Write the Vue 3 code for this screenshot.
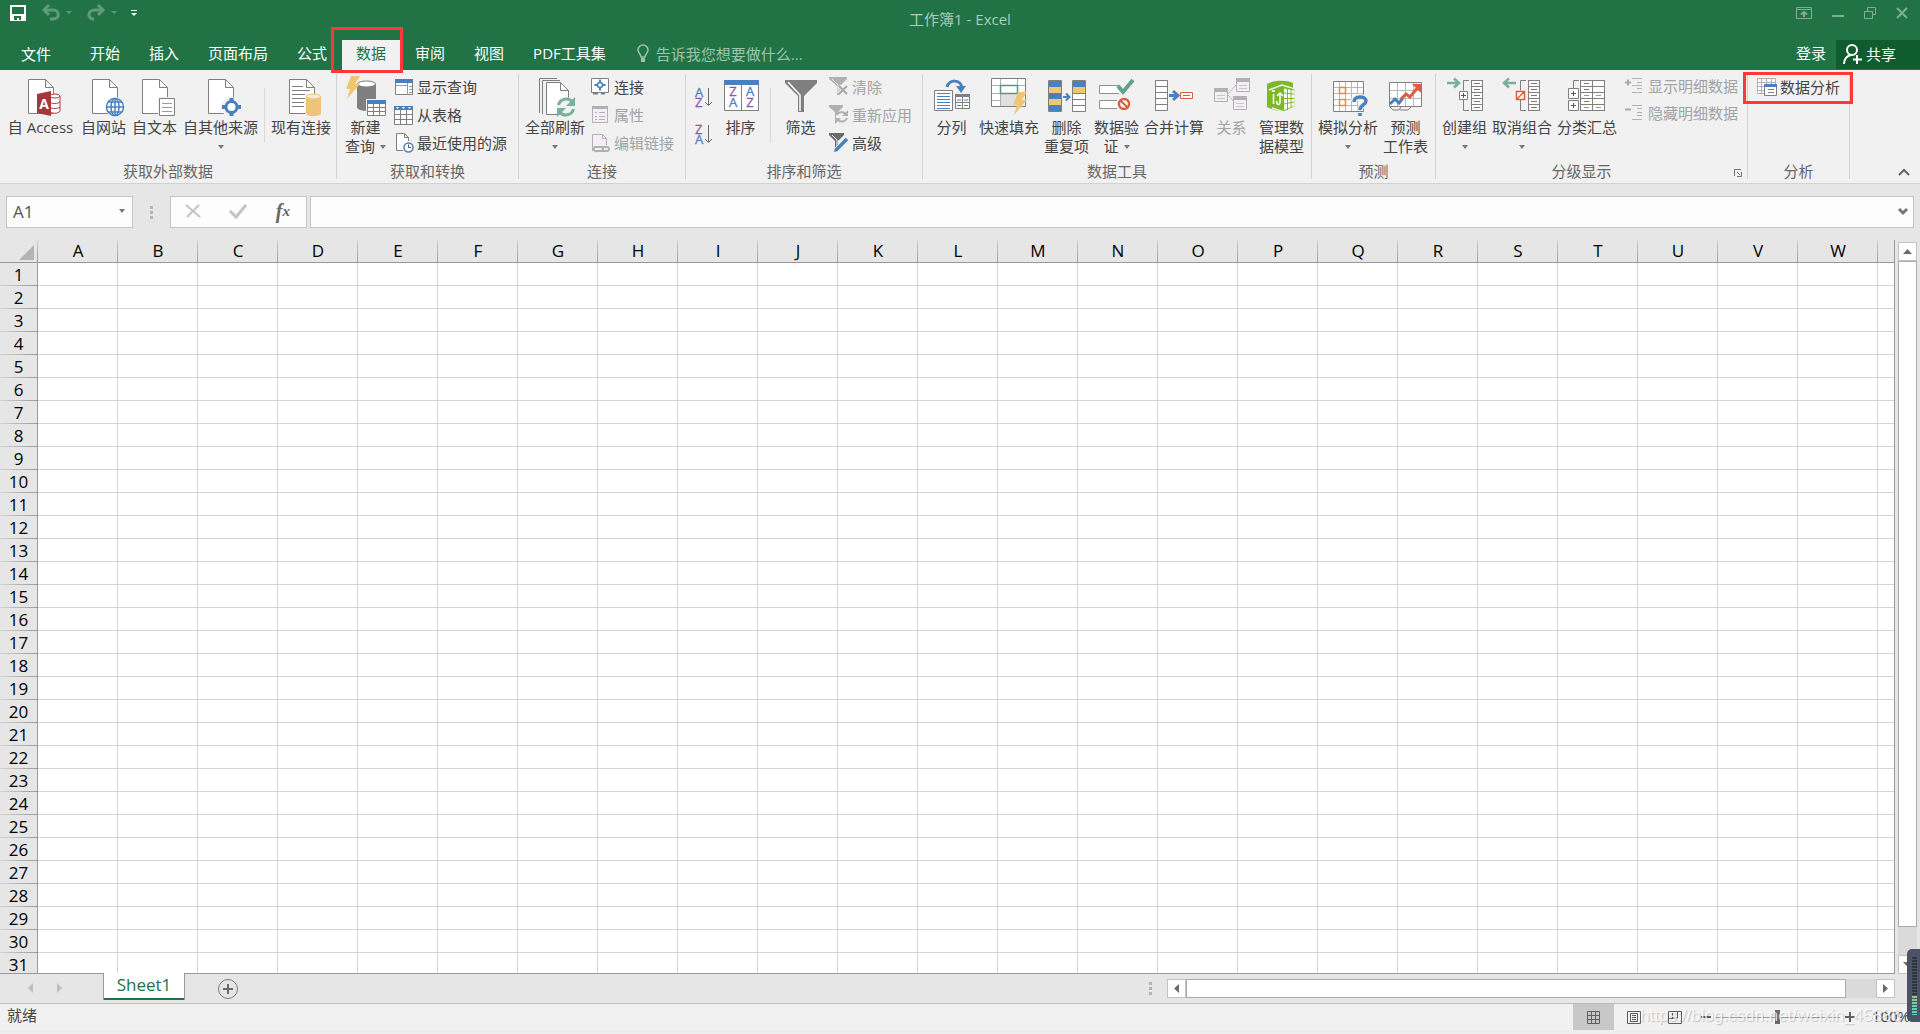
<script setup>
const page = (x = 7, y = 3) =>
  `<path d="M${x + 0.5} ${y + 0.5}h17l8 8v26h-25z" fill="#fff" stroke="#7f7f7f"/><path d="M${x + 17.5} ${y + 0.5}v8h8" fill="none" stroke="#7f7f7f"/>`
const bolt = (x, y) =>
  `<path transform="translate(${x} ${y})" d="M5 0h9l-5 8h5L1 23l3-10H0z" fill="#f0c575"/>`
const lines = (x1, x2, ys, c = '#7f7f7f') =>
  ys.map(y => `<path d="M${x1} ${y}.5H${x2}" stroke="${c}"/>`).join('')
const dashList = (x, w) =>
  `<rect x="${x}.5" y="4.5" width="${w}" height="30" fill="#fff" stroke="#7f7f7f"/>` + lines(x, x + w, [10, 16, 22, 28])

const icons = {
  access: page() + `<path d="M28 19h12v17H28z" fill="#f1f1f1"/><g fill="#fff" stroke="#b23a3e"><path d="M28 20v15c3 3 9 3 11 0V20"/><ellipse cx="34" cy="20" rx="5" ry="2"/><path d="M28 26c3 2 9 2 11 0M28 31c3 2 9 2 11 0" fill="none"/></g><path d="M16 18l14-3v25l-14-3z" fill="#a4373a"/><text x="23" y="33" font-size="14" font-weight="700" fill="#fff" text-anchor="middle">A</text>`,
  web: page(8) + `<circle cx="31" cy="31" r="10" fill="#f1f1f1"/><g fill="#fff" stroke="#4a81bd" stroke-width="1.5"><circle cx="31" cy="31" r="8.5"/><ellipse cx="31" cy="31" rx="4" ry="8.500"/><path d="M31 22v18M22 31h18M24 26h14M24 36h14" fill="none"/></g>`,
  text: page() + `<path d="M23 21h18v20H23z" fill="#f1f1f1"/><path d="M24.500 22.500h15v17h-15z" fill="#fff" stroke="#7f7f7f"/>` + lines(27, 37, [27, 31, 35], '#9a9a9a'),
  other: page() + `<circle cx="30" cy="31" r="10" fill="#f1f1f1"/><circle cx="30.500" cy="31" r="5.500" fill="#fff" stroke="#4a81bd" stroke-width="3"/><path d="M28.500 22h4v4h-4zM28.500 36h4v4h-4zM21 29h5v4h-5zM35 29h5v4h-5z" fill="#4a81bd"/>`,
  existing: page(8) + lines(11, 22, [10]) + lines(11, 29, [14, 18, 22]) + lines(11, 23, [26, 30]) + `<path d="M24 18h17v22H24z" fill="#f1f1f1"/><path d="M25 21v17c3 3 12 3 15 0V21z" fill="#eec47c"/><ellipse cx="32.500" cy="20.500" rx="7" ry="2.500" fill="#fbeccb" stroke="#eec47c"/>`,
  newQuery: `<path d="M11 8v24c3 4 16 4 19 0V8z" fill="#7f7f7f"/><ellipse cx="20.500" cy="8" rx="9" ry="3" fill="#fff" stroke="#7f7f7f"/>` + bolt(0, 0) + `<path d="M20 23h21v18H20z" fill="#f1f1f1"/><path d="M21.500 24.500h18v15h-18z" fill="#fff" stroke="#7f7f7f"/><path d="M21 24h19v4H21z" fill="#4a81bd"/><path d="M22 31.500h17M22 35.500h17M27.500 28v12M33.500 28v12" stroke="#7f7f7f"/>`,
  refresh: `<path d="M4.500 37V2.500H22M7.500 38V4.500H25" fill="none" stroke="#7f7f7f"/><path d="M11.500 6.500h14l8 8v24h-22z" fill="#fff" stroke="#7f7f7f"/><path d="M25.500 6.500v8h8" fill="none" stroke="#7f7f7f"/><circle cx="31" cy="31" r="10" fill="#f1f1f1"/><path d="M23.500 29a8 8 0 0 1 14-3M38.500 33a8 8 0 0 1-14 3" fill="none" stroke="#78b09a" stroke-width="3"/><path d="M40 21v9h-9zM22 41v-9h9z" fill="#78b09a"/>`,
  sort: `<path d="M3.500 4.500h34v30h-34z" fill="#fff" stroke="#7f7f7f"/><path d="M3 4h35v5H3z" fill="#4a81bd"/><path d="M20.500 9v26" stroke="#7f7f7f"/><g font-size="13" text-anchor="middle" stroke-width=".3"><g fill="#8f55a8" stroke="#8f55a8"><text x="12" y="20">Z</text><text x="29" y="31">Z</text></g><g fill="#4a81bd" stroke="#4a81bd"><text x="12" y="31">A</text><text x="29" y="20">A</text></g></g>`,
  filter: `<path d="M4 4h32v3L23 20v16h-6V20L4 7z" fill="#7f7f7f"/><path d="M7 6l12 13v16" fill="none" stroke="#fff" stroke-width="1.500"/>`,
  split: `<path d="M2.500 14.500h18v20h-18z" fill="#fff" stroke="#7f7f7f"/>` + lines(5, 18, [17, 20, 23, 26, 29, 32], '#4a81bd') + `<path d="M23.500 18.500h14v14h-14z" fill="#fff" stroke="#7f7f7f"/><path d="M23 18h15v3H23zM30 20h1v13h-1zM24 26h13v1H24z" fill="#7f7f7f"/><path d="M25 24h4M32 24h4M25 29.500h4M32 29.500h4" stroke="#4a81bd"/><path d="M15 11c2-8 14-8 15 1" fill="none" stroke="#4a81bd" stroke-width="3"/><path d="M24 10l5 7 5-7z" fill="#4a81bd"/>`,
  flash: `<path d="M2.500 2.500h34v28h-34z" fill="#fff" stroke="#7f7f7f"/><path d="M3 9.500h33M3 17.500h33M3 24.500h33M11.500 3v27M28.500 3v27" stroke="#b0b0b0"/><path d="M12 18h16v12H12z" fill="#e0e0e0"/><path d="M11.500 9.500h17v8h-17z" fill="#fff" stroke="#4f9d80" stroke-width="1.500"/>` + bolt(24, 16),
  dedupe: `<path d="M1.500 4.500h13v31h-13zM25.500 4.500h13v31h-13z" fill="#fff" stroke="#7f7f7f"/><path d="M2 5h12v6H2zM2 17h12v6H2zM2 29h12v6H2zM26 5h12v6H26z" fill="#4a81bd"/><path d="M2 11h12v6H2zM2 23h12v6H2zM26 11h12v6H26z" fill="#f0c575"/>` + lines(26, 38, [17, 23, 29]) + `<path d="M16 21h5M19 17.500l3.500 3.500-3.500 3.500" fill="none" stroke="#4a81bd" stroke-width="2"/>`,
  validate: `<path d="M22 9.500H2.500v8H22M20 24.500H2.500v8H20" fill="#fff" stroke="#8f8f8f"/><path d="M21 10l5 6L36 4" fill="none" stroke="#5fa388" stroke-width="4"/><circle cx="27" cy="28" r="5" fill="#fff" stroke="#d9603f" stroke-width="2.500"/><path d="M23.500 24.500l7 7" stroke="#d9603f" stroke-width="2"/>`,
  merge: `<path d="M1.500 4.500h12v30h-12z" fill="#fff" stroke="#7f7f7f"/>` + lines(2, 14, [10, 16, 22, 28]) + `<path d="M15 19.500h7M19 15l5 4.500-5 4.500" fill="none" stroke="#4a81bd" stroke-width="3"/><path d="M26.500 16.500h12v6h-12z" fill="#fff" stroke="#d9603f"/><path d="M29 19.500h7" stroke="#7f7f7f"/>`,
  relation: `<path d="M16 18l8-9M16 19l8 9" stroke="#b9b6ba"/><g fill="#f4eff6" stroke="#b3b0b4"><path d="M2.500 12.500h13v13h-13zM24.500 2.500h13v13h-13zM21.500 20.500h13v13h-13z"/></g><path d="M2 12h14v4H2zM24 2h14v4H24zM21 20h14v4H21z" fill="#b3b0b4"/><path d="M5 19.500h8M5 22.500h8M27 9.500h8M27 12.500h8M24 27.500h8M24 30.500h8" stroke="#c9c6ca"/>`,
  model: `<path d="M5 8c6-4 20-4 26-1v5l2 1v18l-11 5-10-2-7-3z" fill="#7cb928"/><path d="M7 14l13-5 13 4v18l-11 5-12-4" fill="#7cb928" stroke="#f1f1f1" stroke-width="1.500"/><path d="M22 12.500l10 2v15.500l-10 4z" fill="#fff"/><path d="M22 17l10 1M22 22.500h10M22 28l10-2M25.500 12v22M29 12v20" stroke="#7cb928"/><path d="M11.500 18v10M10 15h3M15 20l3-3 3 3M18 17v9c0 4-4 3-3-1" stroke="#fff" fill="none" stroke-width="1.500"/>`,
  whatif: `<path d="M5.500 5.500h30v30h-30z" fill="#fff" stroke="#7f7f7f"/><path d="M6 11.500h29M6 17.500h29M6 23.500h29M6 29.500h29M11.500 6v29M17.500 6v29M23.500 6v29M29.500 6v29" stroke="#b8b8b8"/><path d="M11.500 11.500h6v6h-6zM11.500 23.500h6v6h-6z" fill="#fff" stroke="#e88a3c" stroke-width="1.500"/><path d="M26 25c0-6 11-6 11 0 0 4-5 4-5 9" fill="none" stroke="#f1f1f1" stroke-width="6"/><path d="M26 26c0-7 12-6 12-1 0 4-6 4-6 9M32 37v3" fill="none" stroke="#4a81bd" stroke-width="3.500"/>`,
  forecast: `<path d="M3.500 6.500h32v24h-32z" fill="#fff" stroke="#7f7f7f"/><path d="M4 14.500h31M4 22.500h31M11.500 7v23M19.500 7v23M27.500 7v23" stroke="#b8b8b8"/><path d="M4 31l3 3h6l2-3M14 34h8l3-3" fill="none" stroke="#7f7f7f"/><path d="M4 28l5-5 4 4 4-5" fill="none" stroke="#4a81bd" stroke-width="3"/><path d="M15 23l5-5 4 3 9-11" fill="none" stroke="#d9603f" stroke-width="3"/><path d="M26 8h9v9z" fill="#d9603f"/>`,
  group: dashList(26, 11) + lines(29, 35, [7, 13, 19, 25, 31], '#4a81bd') + `<path d="M24 4.500h-5.500v10M18.500 24v10.500H24" fill="none" stroke="#7f7f7f"/><path d="M14.500 15.500h8v8h-8z" fill="#fff" stroke="#7f7f7f"/><path d="M16 19.500h5M18.500 17v5" stroke="#555"/><path d="M2 7h11M9 2.500l5 4.500-5 4.500" fill="none" stroke="#78b09a" stroke-width="2.500"/>`,
  ungroup: dashList(26, 11) + lines(29, 35, [7, 13, 19, 25, 31], '#4a81bd') + `<path d="M24 4.500h-5.500v10M18.500 24v10.500H24" fill="none" stroke="#7f7f7f"/><path d="M14.500 15.500h8v8h-8zM15 23l7-7" fill="#fff" stroke="#d9603f" stroke-width="1.500"/><path d="M14 7H3M7 2.500L2 7l5 4.500" fill="none" stroke="#78b09a" stroke-width="2.500"/>`,
  subtotal: dashList(13, 24) + `<path d="M25.500 5v30M12 4.500H6.500v8" stroke="#7f7f7f" fill="none"/>` + lines(17, 22, [7, 13], '#4a81bd') + lines(17, 22, [19, 31], '#e88a3c') + lines(17, 22, [25], '#4a81bd') + lines(29, 34, [19, 31], '#e88a3c') + `<path d="M1.500 12.500h10v10h-10zM1.500 24.500h10v10h-10z" fill="#fff" stroke="#7f7f7f"/><path d="M4 17.500h5M6.500 15v5M4 29.500h5M6.500 27v5" stroke="#555"/>`,
  showQuery: `<path d="M1.500 2.500h17v15h-17z" fill="#fff" stroke="#7f7f7f"/><path d="M1 2h18v4H1z" fill="#4a81bd"/><path d="M2 8.500h11M13.500 6v12M15 9.500h3M15 12.500h3M15 15.500h3" stroke="#9a9a9a"/>`,
  table: `<path d="M.5 1.500h18v18H.5z" fill="#fff" stroke="#7f7f7f"/><path d="M0 1h19v4H0z" fill="#4a81bd"/><path d="M1 9.500h17M1 14.500h17M6.500 5v14M12.500 5v14" stroke="#7f7f7f"/><path d="M2 2h3L3.500 4zM8 2h3L9.500 4zM14 2h3l-1.500 2z" fill="#fff"/>`,
  recent: `<path d="M9 17.500H2.500V.5h8l4 4V8M10.500.5v4h4" fill="#fff" stroke="#7f7f7f"/><circle cx="14.500" cy="14.500" r="4.500" fill="#fff" stroke="#4a81bd" stroke-width="1.500"/><path d="M14.500 11.500v3H17" fill="none" stroke="#555"/>`,
  connect: `<path d="M.5 1.500h17v14H.5z" fill="#fff" stroke="#7f7f7f"/><path d="M2 16.500h5M10 16.500h4" stroke="#7f7f7f" stroke-width="2"/><circle cx="9" cy="8" r="2.500" fill="none" stroke="#4a81bd" stroke-width="1.500"/><path d="M9 2.500v3M9 10.500v3M3.500 8h3M11.500 8h3" stroke="#4a81bd" stroke-width="2"/>`,
  props: `<path d="M1.500 1.500h15v16h-15z" fill="#f4eff6" stroke="#b3b0b4"/><path d="M1 1h16v3H1z" fill="#b3b0b4"/><path d="M4 7.500h2M8 7.500h6M4 11.500h2M8 11.500h6M4 14.500h2M8 14.500h6" stroke="#b3b0b4"/>`,
  links: `<path d="M1.500 18V1.500h10l4 4V12M11.500 1.500v4h4" fill="#f4eff6" stroke="#b3b0b4"/><path d="M4 14h6a2 2 0 0 1 0 4H6a2 2 0 0 1-2-4zM11 14h5a2 2 0 0 1 0 4h-5" fill="none" stroke="#b3b0b4" stroke-width="2"/>`,
  clear: `<path d="M0 0h18v2l-7 7v9H8V9L0 2z" fill="#b3b0b4"/><path d="M3 2l6 6v8" stroke="#f1f1f1" fill="none"/><path d="M10 9l8 8M18 9l-8 8" stroke="#f1f1f1" stroke-width="4"/><path d="M10 9l8 8M18 9l-8 8" stroke="#a8a8a8" stroke-width="2"/>`,
  reapply: `<path d="M0 0h14v2L9 7v6H6V7L0 2z" fill="#b3b0b4"/><circle cx="13" cy="12" r="6" fill="#f1f1f1"/><path d="M7.500 10a5.500 5.500 0 0 1 9-1M18 13a5.500 5.500 0 0 1-9 2" fill="none" stroke="#b3b0b4" stroke-width="2"/><path d="M19 5v6h-6zM6 19v-6h6z" fill="#b3b0b4"/>`,
  advanced: `<path d="M0 0h15v2L9 8v7H6V8L0 2z" fill="#6b6b6b"/><path d="M3 2l5 5v7" stroke="#fff" fill="none"/><path d="M7 17L18 6" stroke="#f1f1f1" stroke-width="5"/><path d="M7 17L18 6" stroke="#4a81bd" stroke-width="3.500"/><path d="M5 19l1-4 3 3z" fill="#4a81bd"/>`,
  showDetail: `<path d="M0 5.500h6M3 2.500v6" stroke="#aaa" stroke-width="2"/><path d="M7 1.500h10M7 8.500h10M12 5.500h5M12 11.500h5M7 15.500h10" stroke="#b3b3b3"/>`,
  hideDetail: `<path d="M0 5.500h6" stroke="#aaa" stroke-width="2"/><path d="M7 1.500h10M12 4.500h5M12 8.500h5M12 11.500h5M7 15.500h10" stroke="#b3b3b3"/>`,
  analysis: `<path d="M.5 1.500h18v15H.5zM0 5.500h18M0 9.500h18M0 13.500h18M4.500 1v15M9.500 1v15M14.500 1v15" fill="#fff" stroke="#b0b0b0"/><path d="M7.500 7.500h12v11h-12z" fill="#fff" stroke="#7f7f7f"/><path d="M7 7h13v3H7z" fill="#4a81bd"/><path d="M11 12.500h6M11 15.500h6" stroke="#7f7f7f"/>`,
}

const tabs = ['开始', '插入', '页面布局', '公式', '数据', '审阅', '视图', 'PDF工具集']

const groups = [
  { cls: 'external', title: '获取外部数据', items: [
    { icon: 'access', lines: ['自 Access'] }, { icon: 'web', lines: ['自网站'] }, { icon: 'text', lines: ['自文本'] },
    { icon: 'other', lines: ['自其他来源', ''], drop: true }, { sep: true }, { icon: 'existing', lines: ['现有连接'] } ] },
  { cls: 'transform', title: '获取和转换', items: [
    { icon: 'newQuery', lines: ['新建', '查询'], drop: true },
    { list: [['showQuery', '显示查询'], ['table', '从表格'], ['recent', '最近使用的源']] } ] },
  { cls: 'connections', title: '连接', items: [
    { icon: 'refresh', lines: ['全部刷新', ''], drop: true },
    { list: [['connect', '连接'], ['props', '属性', true], ['links', '编辑链接', true]] } ] },
  { cls: 'sorting', title: '排序和筛选', items: [
    { az: true }, { icon: 'sort', lines: ['排序'] }, { sep: true }, { icon: 'filter', lines: ['筛选'] },
    { list: [['clear', '清除', true], ['reapply', '重新应用', true], ['advanced', '高级']] } ] },
  { cls: 'tools', title: '数据工具', items: [
    { icon: 'split', lines: ['分列'] }, { icon: 'flash', lines: ['快速填充'] }, { icon: 'dedupe', lines: ['删除', '重复项'] },
    { icon: 'validate', lines: ['数据验', '证'], drop: true }, { icon: 'merge', lines: ['合并计算'] },
    { icon: 'relation', lines: ['关系'], off: true }, { icon: 'model', lines: ['管理数', '据模型'] } ] },
  { cls: 'forecasting', title: '预测', items: [
    { icon: 'whatif', lines: ['模拟分析', ''], drop: true }, { icon: 'forecast', lines: ['预测', '工作表'] } ] },
  { cls: 'outline', title: '分级显示', launcher: true, items: [
    { icon: 'group', lines: ['创建组', ''], drop: true }, { icon: 'ungroup', lines: ['取消组合', ''], drop: true },
    { icon: 'subtotal', lines: ['分类汇总'] },
    { list: [['showDetail', '显示明细数据', true], ['hideDetail', '隐藏明细数据', true]] } ] },
  { cls: 'analyze', title: '分析', items: [{ list: [['analysis', '数据分析']] }] },
]

const letterColor = { A: '#4a81bd', Z: '#8f55a8' }
const columns = 'ABCDEFGHIJKLMNOPQRSTUVW'.split('')
const rowCount = 31
</script>

<template>
  <div class="app">
    <header class="head">
      <div class="titlebar">
        <div class="quick">
          <button aria-label="保存"><svg width="16" height="16"><path d="M1 1h14v14H1z" fill="none" stroke="#fff" stroke-width="2" /><path d="M1 9h14v6H1z" fill="#fff" /><path d="M4 11h7v4H9v-2H7v2H4z" fill="#217346" /></svg></button>
          <button aria-label="撤消" class="undo"><svg width="30" height="16"><g fill="none" stroke="#5f9a7a" stroke-width="3"><path d="M2 5h9c7 0 7 9 0 9H8" /><path d="M7 0L2 5l5 5" /></g><path d="M24 6h6l-3 3z" fill="#5f9a7a" /></svg></button>
          <button aria-label="恢复" class="redo"><svg width="30" height="16"><g fill="none" stroke="#5f9a7a" stroke-width="3"><path d="M16 5H8c-8 0-8 9-1 9" /><path d="M11 0l5 5-5 5" /></g><path d="M24 6h6l-3 3z" fill="#5f9a7a" /></svg></button>
          <button aria-label="自定义快速访问工具栏" class="more"><svg width="6" height="8"><path d="M0 1.500h6" stroke="#fff" /><path d="M0 4h6L3 7z" fill="#fff" /></svg></button>
        </div>
        <h1>工作簿1 - Excel</h1>
        <div class="window">
          <button aria-label="功能区显示选项"><svg width="16" height="12"><path d="M.5.500h15v11H.5zM1 2.500h14" fill="none" stroke="#7fae94" /><path d="M8 10V5M5 7.500L8 5l3 2.500" fill="none" stroke="#7fae94" stroke-width="2" /></svg></button>
          <button aria-label="最小化"><svg width="12" height="12"><path d="M0 9h12" stroke="#7fae94" stroke-width="2" /></svg></button>
          <button aria-label="还原"><svg width="12" height="12"><path d="M.5 4.500h8v7h-8zM3.500 4V.5h8v7H9" fill="none" stroke="#7fae94" /></svg></button>
          <button aria-label="关闭"><svg width="12" height="12"><path d="M1 1l10 10M11 1L1 11" stroke="#7fae94" stroke-width="2" /></svg></button>
        </div>
      </div>
      <nav class="tabs">
        <button class="file">文件</button>
        <button v-for="t in tabs" :key="t" class="tab" :class="{ active: t === '数据' }">{{ t }}</button>
        <button class="tell"><svg width="12" height="18"><path d="M4 12c0-3-3-4-3-7a5 5 0 0 1 10 0c0 3-3 4-3 7z" fill="none" stroke="#9dc4ae" stroke-width="1.500" /><path d="M4 13h4v4H4z" fill="#9dc4ae" /></svg>告诉我您想要做什么...</button>
        <button class="login">登录</button>
        <button class="share"><svg width="20" height="20"><g fill="none" stroke="#fff" stroke-width="2"><circle cx="9" cy="6" r="5" /><path d="M1 20c0-5 3-8 7-9M14 11v9M10 15.500h9" /></g></svg>共享</button>
      </nav>
    </header>

    <section class="ribbon">
      <div v-for="g in groups" :key="g.title" class="group" :class="g.cls">
        <div class="body">
          <template v-for="(it, i) in g.items" :key="i">
            <span v-if="it.sep" class="sep"></span>
            <div v-else-if="it.az" class="az">
              <button v-for="p in ['AZ', 'ZA']" :key="p" :aria-label="p === 'AZ' ? '升序' : '降序'">
                <svg width="18" height="22"><g font-size="13" stroke-width=".3"><text v-for="(c, n) in p" :key="c" x="0" :y="n * 10 + 10" :fill="letterColor[c]" :stroke="letterColor[c]">{{ c }}</text></g><path d="M13.500 1v17M10 15l3.500 3.500L17 15" fill="none" stroke="#6b6b6b" /></svg>
              </button>
            </div>
            <div v-else-if="it.list" class="list">
              <button v-for="r in it.list" :key="r[1]" :class="{ off: r[2] }">
                <svg width="20" height="20" v-html="icons[r[0]]"></svg>{{ r[1] }}
              </button>
            </div>
            <button v-else class="big" :class="{ off: it.off }">
              <svg class="ico" width="40" height="42" v-html="icons[it.icon]"></svg>
              <span v-for="(l, n) in it.lines" :key="n" class="line">{{ l }}<i v-if="it.drop && n === 1" class="caret" :class="{ after: l }"></i></span>
            </button>
          </template>
        </div>
        <div class="title">{{ g.title }}</div>
        <button v-if="g.launcher" class="launcher" aria-label="分级显示设置"><svg width="8" height="8"><path d="M.5 7V.5H7" fill="none" stroke="#777" /><path d="M3 3l3 3M7.500 3v4.500H3" fill="none" stroke="#777" /></svg></button>
      </div>
      <button class="collapse" aria-label="折叠功能区"><svg width="12" height="8"><path d="M1 7l5-5 5 5" fill="none" stroke="#666" stroke-width="2" /></svg></button>
    </section>

    <section class="formula">
      <div class="namebox"><input value="A1" aria-label="名称框" /><i class="caret"></i></div>
      <span class="dots"><i></i><i></i><i></i></span>
      <div class="fx">
        <button aria-label="取消"><svg width="16" height="16"><path d="M1 2l14 12M14 2L2 14" stroke="#c3c3c3" stroke-width="2" /></svg></button>
        <button aria-label="输入"><svg width="18" height="16"><path d="M1 8l6 6L17 2" fill="none" stroke="#c3c3c3" stroke-width="3" /></svg></button>
        <button aria-label="插入函数" class="fn">f<small>x</small></button>
      </div>
      <div class="entry"><input aria-label="编辑栏" /><svg width="10" height="8"><path d="M1 1l4 4 4-4" fill="none" stroke="#777" stroke-width="3" /></svg></div>
    </section>

    <main class="work">
      <div class="grid">
        <table>
          <thead>
            <tr><th class="corner"><svg width="16" height="16"><path d="M16 0v15H1z" fill="#b4b4b4" /></svg></th><th v-for="c in columns" :key="c" scope="col">{{ c }}</th><th class="rest"></th></tr>
          </thead>
          <tbody>
            <tr v-for="r in rowCount" :key="r"><th scope="row">{{ r }}</th><td v-for="c in columns" :key="c"></td><td class="rest"></td></tr>
          </tbody>
        </table>
      </div>
      <div class="vscroll">
        <button aria-label="向上"><svg width="9" height="5"><path d="M0 5h9L4.500 0z" fill="#6b6b6b" /></svg></button>
        <div class="track"><div class="thumb"></div></div>
        <button aria-label="向下"><svg width="9" height="5"><path d="M0 0h9L4.500 5z" fill="#6b6b6b" /></svg></button>
      </div>
    </main>

    <section class="sheets">
      <button class="nav" aria-label="上一张"><svg width="6" height="10"><path d="M5 0v10L0 5z" fill="#bdbdbd" /></svg></button>
      <button class="nav next" aria-label="下一张"><svg width="6" height="10"><path d="M0 0v10l5-5z" fill="#bdbdbd" /></svg></button>
      <button class="sheet">Sheet1</button>
      <button class="add" aria-label="新工作表"><svg width="20" height="20"><circle cx="10" cy="10" r="9.500" fill="none" stroke="#7a7a7a" /><path d="M5 10h10M10 5v10" stroke="#6b6b6b" stroke-width="2" /></svg></button>
      <span class="dots"><i></i><i></i><i></i></span>
      <div class="hscroll">
        <button aria-label="向左"><svg width="5" height="9"><path d="M5 0v9L0 4.500z" fill="#6b6b6b" /></svg></button>
        <div class="track"><div class="thumb"></div></div>
        <button aria-label="向右"><svg width="5" height="9"><path d="M0 0v9l5-4.500z" fill="#6b6b6b" /></svg></button>
      </div>
    </section>

    <footer class="status">
      <span class="ready">就绪</span>
      <button class="view on" aria-label="普通"><svg width="13" height="13"><path d="M.5.500h12v12H.5zM4.500 0v13M8.500 0v13M0 4.500h13M0 8.500h13" fill="none" stroke="#5f5f5f" /></svg></button>
      <button class="view" aria-label="页面布局"><svg width="14" height="13"><path d="M.5.500h13v12H.5zM3.500 2.500h7v8h-7zM5 4.500h4M5 6.500h4M5 8.500h4" fill="none" stroke="#5f5f5f" /></svg></button>
      <button class="view" aria-label="分页预览"><svg width="14" height="13"><path d="M.5.500h13v12H.5zM4.500 1v6h5V1M1 7.500h4" fill="none" stroke="#5f5f5f" /></svg></button>
      <button class="zoom" aria-label="缩小"><svg width="10" height="10"><path d="M0 5h10" stroke="#5f5f5f" stroke-width="2" /></svg></button>
      <input class="slider" type="range" min="0" max="100" value="50" aria-label="缩放" />
      <button class="zoom" aria-label="放大"><svg width="10" height="10"><path d="M0 5h10M5 0v10" stroke="#5f5f5f" stroke-width="2" /></svg></button>
      <button class="percent">100%</button>
      <span class="mark">https://blog.csdn.net/weixin_45886</span>
    </footer>
    <div class="meter"><span></span></div>
  </div>
</template>

<style>
body { margin: 0; overflow: hidden; }
</style>

<style scoped>
.app { position: relative; display: flex; flex-direction: column; height: 100vh; box-sizing: border-box; padding-bottom: 4px; background: #ededed; font: 15px/19px "Open Sans", "Noto Sans CJK SC", sans-serif; color: #444; }
.app *, .app *::before, .app *::after { box-sizing: border-box; }
button { display: flex; align-items: center; justify-content: center; flex: none; margin: 0; padding: 0; border: 0; background: none; font: inherit; color: inherit; white-space: nowrap; }
input { font: inherit; margin: 0; padding: 0; border: 0; outline: 0; background: none; min-width: 0; }
svg { display: block; flex: none; overflow: visible; }

.head { background: #217346; color: #fff; }
.titlebar { position: relative; display: flex; justify-content: space-between; height: 40px; padding: 5px 12px 0 10px; }
.quick, .window { display: flex; height: 16px; align-items: center; }
.undo { margin-left: 16px; }
.redo { margin-left: 15px; }
.more { margin-left: 14px; }
.window { gap: 20px; }
h1 { position: absolute; left: 0; right: 0; top: 10px; margin: 0; text-align: center; font: inherit; color: #a9cdb8; }
.tabs { display: flex; height: 30px; gap: 1px; }
.file { width: 72px; margin-right: 3px; padding-bottom: 2px; }
.tab { position: relative; padding: 0 14px 3px; }
.active { background: #f1f1f1; color: #217346; }
.active::after { content: ""; position: absolute; z-index: 2; inset: -13px -3px -3px -11px; border: 3px solid #ff3838; }
.tell { gap: 7px; margin-left: 16px; padding-bottom: 2px; color: #9dc4ae; }
.login { margin-left: auto; padding: 0 9px 3px; }
.share { width: 84px; height: 29px; padding: 0 17px 1px 0; gap: 3px; background: #0f5c2f; }

.ribbon { position: relative; display: flex; height: 114px; background: #f1f1f1; border-bottom: 1px solid #d2d2d2; }
.group { position: relative; flex: none; display: flex; flex-direction: column; margin: 4px 0; border-right: 1px solid #d2d2d2; }
.external { width: 337px; }
.transform { width: 182px; }
.connections { width: 167px; }
.sorting { width: 237px; }
.tools { width: 389px; }
.forecasting { width: 124px; }
.outline { width: 312px; }
.analyze { width: 102px; }
.body { display: flex; flex: 1; gap: 5px; padding-left: 6px; align-items: flex-start; }
.external .body { gap: 6px; }
.external .big:first-child { min-width: 69px; }
.sorting .body { padding-left: 9px; }
.title { height: 15px; line-height: 15px; text-align: center; color: #666; }
.outline .title { padding-right: 20px; }
.big { flex-direction: column; justify-content: flex-start; min-width: 45px; padding-top: 2px; }
.line { display: flex; align-items: center; justify-content: center; height: 19px; }
.caret { flex: none; width: 0; height: 0; border: 3px solid transparent; border-top: 4px solid #777; border-bottom: 0; }
.caret.after { margin-left: 5px; }
.sep { width: 1px; height: 55px; margin-top: 14px; background: #d9d9d9; }
.sorting .sep { margin-left: 2px; margin-right: 2px; }
.list { display: flex; flex-direction: column; margin: -1px 0 0 1px; }
.list button { height: 28px; gap: 3px; justify-content: flex-start; }
.outline .list, .analyze .list { margin-left: 3px; }
.outline .list button { height: 27px; }
.off { color: #a3a3a3; }
.az { display: flex; flex-direction: column; gap: 15px; padding-top: 13px; width: 18px; }
.analyze::before { content: ""; position: absolute; z-index: 2; top: -2px; left: -5px; right: -4px; height: 32px; border: 3px solid #ff3838; }
.launcher { position: absolute; right: 5px; bottom: 2px; }
.collapse { margin: 98px 10px 0 auto; height: 8px; }

.formula { display: flex; height: 56px; padding: 12px 6px 12px; background: #e6e6e6; }
.namebox, .fx, .entry { display: flex; align-items: center; background: #fdfdfd; border: 1px solid #c3c3c3; }
.namebox { width: 127px; padding: 0 7px 2px 6px; }
.namebox input { flex: 1; font-size: 17px; color: #555; }
.dots { display: flex; flex-direction: column; justify-content: center; gap: 2px; width: 3px; }
.dots i { width: 3px; height: 3px; background: #b4b4b4; }
.formula .dots { margin: 0 17px; }
.fx { width: 137px; padding: 0 16px 2px 14px; justify-content: space-between; }
.fn { font: italic 700 20px/20px "Liberation Serif", serif; color: #666; }
.fn small { font-size: 15px; }
.entry { flex: 1; margin-left: 3px; padding-right: 5px; }
.entry input { flex: 1; height: 28px; }

.work { display: flex; flex: 1; min-height: 0; background: #e6e6e6; }
.grid { flex: 1; min-width: 0; overflow: hidden; background: #fff; border-right: 1px solid #999; border-bottom: 1px solid #999; }
table { width: 100%; table-layout: fixed; border-collapse: separate; border-spacing: 0; }
th, td { height: 23px; padding: 0; border-right: 1px solid #d4d4d4; border-bottom: 1px solid #d4d4d4; }
th { font-weight: 400; font-size: 17px; line-height: 22px; color: #000; background: #e6e6e6; }
thead th { width: 80px; border-right: 0; border-bottom-color: #999; background: linear-gradient(#d4d4d4, #999) right / 1px 100% no-repeat #e6e6e6; }
thead .corner { width: 38px; }
thead .corner svg { margin: 3px 0 0 18px; }
thead .rest { width: auto; background: #e6e6e6; }
.rest { border-right: 0; }
tbody th { border-right-color: #999; border-bottom: 0; background: linear-gradient(90deg, #d4d4d4, #999) bottom / 100% 1px no-repeat #e6e6e6; }
.vscroll { display: flex; flex-direction: column; width: 25px; padding: 2px 3px 0 3px; }
.vscroll button, .hscroll button { width: 19px; height: 19px; background: #fff; border: 1px solid #c3c3c3; }
.track { flex: 1; background: #dadada; }
.thumb { background: #fff; border: 1px solid #ababab; }
.vscroll .thumb { height: 96%; }

.sheets { display: flex; height: 29px; background: #e6e6e6; padding: 0 25px 0 28px; }
.nav { width: 6px; height: 28px; }
.next { margin-left: 23px; }
.sheet { width: 82px; height: 27px; margin: -1px 0 0 40px; padding-bottom: 5px; background: #fff; color: #217346; border: solid #999; border-width: 0 1px; box-shadow: inset 0 -2px #217346; font-size: 17px; }
.add { margin-left: 33px; height: 29px; }
.sheets .dots { margin-left: auto; }
.hscroll { display: flex; width: 728px; margin-left: 15px; align-items: center; }
.hscroll .track { height: 19px; display: flex; }
.hscroll .thumb { width: 95.600%; }

.status { position: relative; display: flex; align-items: center; height: 27px; padding-right: 10px; background: #f1f1f1; border-top: 1px solid #bdbdbd; }
.ready { margin: -4px auto 0 7px; }
.view { width: 41px; height: 26px; }
.on { background: #c8c8c8; }
.zoom { width: 10px; margin-left: 5px; }
.slider { appearance: none; width: 125px; height: 14px; margin-left: 4px; background: linear-gradient(#a0a0a0, #a0a0a0) center / 100% 1px no-repeat; }
.slider::-webkit-slider-thumb { appearance: none; width: 5px; height: 14px; background: #6b6b6b; }
.percent { margin-left: 17px; padding-bottom: 2px; }
.mark { position: absolute; right: 19px; top: 1px; font: 17px/22px "Liberation Sans", sans-serif; color: rgba(255, 255, 255, .75); text-shadow: 1px 1px 1px rgba(0, 0, 0, .2); }
.meter { position: absolute; right: 0; bottom: 12px; width: 13px; height: 73px; padding: 8px 3px 7px 5px; background: #4d5266; border-radius: 5px 0 0 5px; }
.meter span { display: block; height: 58px; background: repeating-linear-gradient(transparent 0 2px, #4d5266 2px 3px), linear-gradient(#30343f 0 65%, #9ccc6e 65%, #5bd0b5 90%); }
</style>
